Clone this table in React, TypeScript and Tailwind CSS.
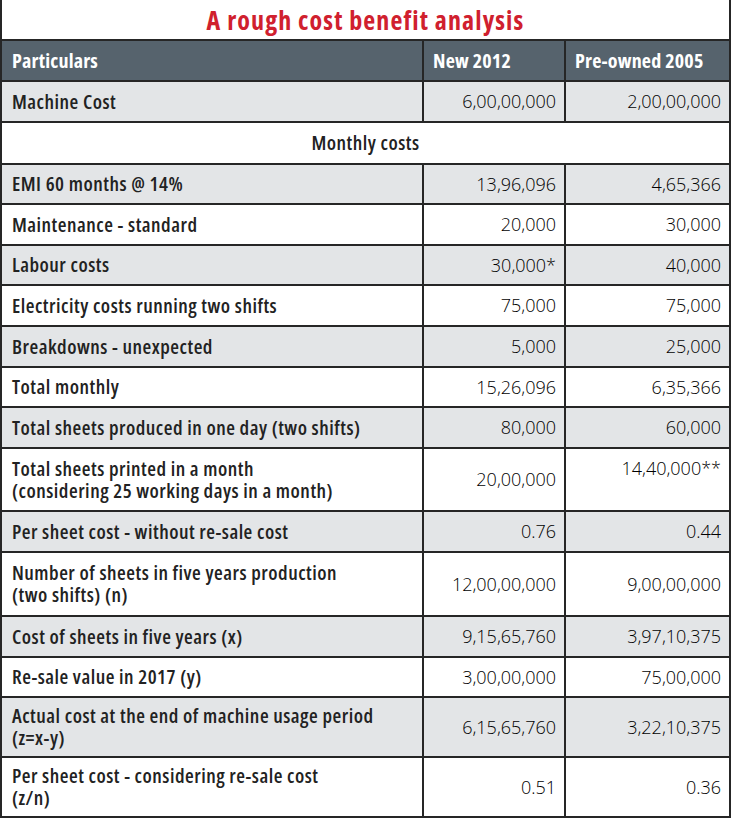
import React from "react";

type Row = {
  label?: string[];
  section?: string;
  a?: string;
  b?: string;
  gray?: boolean;
  h: string;
  bTop?: boolean;
};

const rows: Row[] = [
  { label: ["Machine Cost"], a: "6,00,00,000", b: "2,00,00,000", gray: true, h: "h-[41px]" },
  { section: "Monthly costs", h: "h-[42px]" },
  { label: ["EMI 60 months @ 14%"], a: "13,96,096", b: "4,65,366", gray: true, h: "h-[40px]" },
  { label: ["Maintenance - standard"], a: "20,000", b: "30,000", h: "h-[41px]" },
  { label: ["Labour costs"], a: "30,000*", b: "40,000", gray: true, h: "h-[40px]" },
  { label: ["Electricity costs running two shifts"], a: "75,000", b: "75,000", h: "h-[41px]" },
  { label: ["Breakdowns - unexpected"], a: "5,000", b: "25,000", gray: true, h: "h-[41px]" },
  { label: ["Total monthly"], a: "15,26,096", b: "6,35,366", h: "h-[40px]" },
  { label: ["Total sheets produced in one day (two shifts)"], a: "80,000", b: "60,000", gray: true, h: "h-[41px]" },
  {
    label: ["Total sheets printed in a month", "(considering 25 working days in a month)"],
    a: "20,00,000",
    b: "14,40,000**",
    bTop: true,
    h: "h-[63px]",
  },
  { label: ["Per sheet cost - without re-sale cost"], a: "0.76", b: "0.44", gray: true, h: "h-[41px]" },
  {
    label: ["Number of sheets in five years production", "(two shifts) (n)"],
    a: "12,00,00,000",
    b: "9,00,00,000",
    h: "h-[64px]",
  },
  { label: ["Cost of sheets in five years (x)"], a: "9,15,65,760", b: "3,97,10,375", gray: true, h: "h-[41px]" },
  { label: ["Re-sale value in 2017 (y)"], a: "3,00,00,000", b: "75,00,000", h: "h-[40px]" },
  {
    label: ["Actual cost at the end of machine usage period", "(z=x-y)"],
    a: "6,15,65,760",
    b: "3,22,10,375",
    gray: true,
    h: "h-[60px]",
  },
  {
    label: ["Per sheet cost - considering re-sale cost", "(z/n)"],
    a: "0.51",
    b: "0.36",
    h: "h-[60px]",
  },
];

const font = { fontFamily: '"Open Sans", "Liberation Sans", sans-serif' };

export default function App() {
  return (
    <div className="w-[733px] h-[818px] bg-white overflow-hidden" style={font}>
      <div className="w-[731px] border-l-2 border-r-2 border-[#262626]">
        <div className="h-[39px] flex items-center justify-center pt-[1px]">
          <span className="text-[26px] font-bold text-[#d0202e] tracking-[1.1px] leading-none [font-stretch:75%]">
            A rough cost benefit analysis
          </span>
        </div>
        <div className="grid grid-cols-[422px_142px_1fr] h-[43px] border-t-2 border-b-2 border-[#262626] bg-[#56636d] text-white text-[20px] font-bold tracking-[0.2px] [font-stretch:75%]">
          <div className="flex items-center pl-[10px] border-r-2 border-[#262626]">Particulars</div>
          <div className="flex items-center pl-[9px] border-r-2 border-[#262626]">New 2012</div>
          <div className="flex items-center pl-[9px]">Pre-owned 2005</div>
        </div>
        {rows.map((r, i) =>
          r.section ? (
            <div
              key={i}
              className={`${r.h} flex items-center justify-center border-b-2 border-[#262626] text-[20px] font-semibold tracking-[0.5px] text-[#222] [font-stretch:75%]`}
            >
              {r.section}
            </div>
          ) : (
            <div
              key={i}
              className={`${r.h} grid grid-cols-[422px_142px_1fr] border-b-2 border-[#262626] ${
                r.gray ? "bg-[#e3e5e7]" : "bg-white"
              }`}
            >
              <div className="flex flex-col justify-center pl-[10px] border-r-2 border-[#262626] text-[20px] font-semibold tracking-[0.5px] text-[#222] leading-[22px] [font-stretch:75%]">
                {r.label!.map((l, j) => (
                  <div key={j}>{l}</div>
                ))}
              </div>
              <div className="flex items-center justify-end pr-[8px] border-r-2 border-[#262626] text-[18px] font-light text-[#000]">
                {r.a}
              </div>
              <div
                className={`flex justify-end pr-[8px] text-[18px] font-light text-[#000] ${
                  r.bTop ? "items-start pt-[6px]" : "items-center"
                }`}
              >
                {r.b}
              </div>
            </div>
          )
        )}
      </div>
    </div>
  );
}
